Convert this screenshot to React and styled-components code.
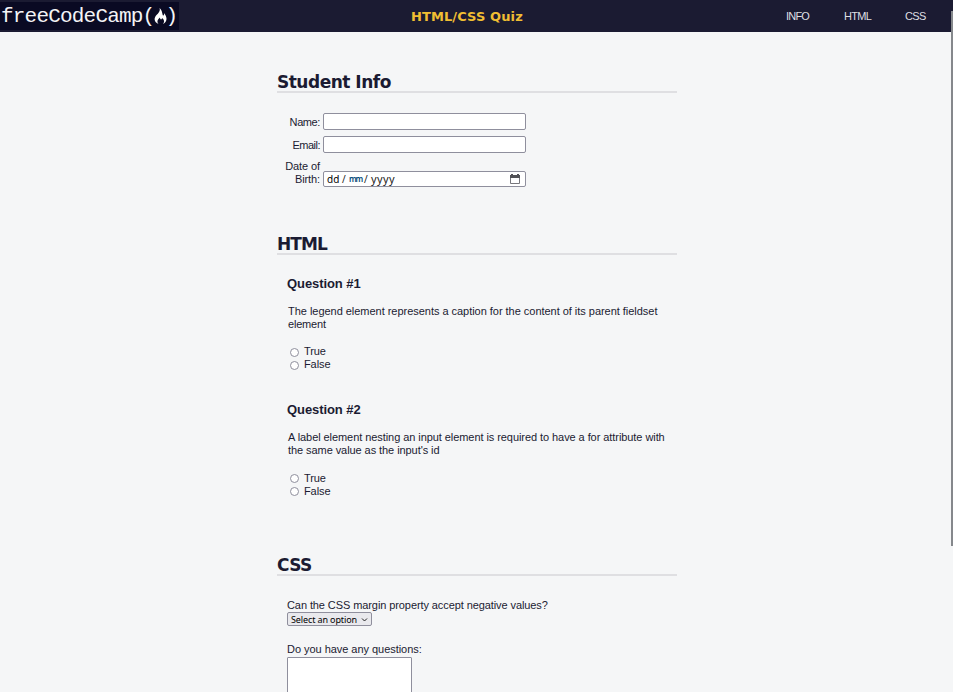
import React from "react";
import styled, { createGlobalStyle } from "styled-components";

const Global = createGlobalStyle`
  *, *::before, *::after { box-sizing: border-box; }
  html, body { margin: 0; overflow: hidden; }
  body {
    background: #f5f6f7;
    color: #1b1b32;
    font: 11px/13px "Liberation Sans", Arial, sans-serif;
  }
`;
const Page = styled.div`height: 692px; overflow: hidden;`;
const Header = styled.header`
  display: grid;
  grid-template-columns: 411px 1fr 167px;
  height: 32px;
  background: #1b1b32;
`;
const Logo = styled.div`
  display: flex;
  align-items: center;
  width: 179px;
  height: 28px;
  margin-top: 2px;
  padding: 1px 0 0 1px;
  background: #0a0a23;
  color: #f4f4f6;
  font: 21px/26px "Liberation Mono", monospace;
  letter-spacing: -0.8px;
  white-space: pre;
`;
const LogoDrawing = styled.svg`display: block; flex: none; margin: 0 -2px 1px 0;`;
const Title = styled.h1`
  margin: 0;
  color: #f1be32;
  font: bold 13px/33px "DejaVu Sans", Verdana, sans-serif;
  letter-spacing: 0.1px;
  white-space: nowrap;
`;
const Nav = styled.nav`
  display: grid;
  grid-template-columns: 58px 61px 1fr;
`;
const NavLink = styled.a`
  color: #dfdfe2;
  line-height: 33px;
  letter-spacing: ${(p) => p.$track || 0}px;
`;
const Form = styled.form`width: 400px; margin-left: 277px;`;
const Section = styled.section`
  height: ${(p) => p.$height}px;
  padding-top: 40px;
`;
const SectionTitle = styled.h2`
  height: 21px;
  margin: 0;
  border-bottom: 2px solid #dfdfe2;
  font: bold 17px/21px "DejaVu Sans", Verdana, sans-serif;
  letter-spacing: ${(p) => p.$track || 0}px;
  white-space: nowrap;
`;
const Fields = styled.div`
  display: grid;
  grid-template-columns: 43px 203px;
  grid-template-rows: 17px 17px 28px;
  column-gap: 3px;
  row-gap: 6px;
  padding-top: 20px;
`;
const Label = styled.label`
  align-self: end;
  padding-bottom: 1px;
  text-align: right;
  white-space: pre;
  letter-spacing: ${(p) => p.$track || 0}px;
`;
const Input = styled.input`
  width: 203px;
  height: 17px;
  padding: 1px 3px;
  border: 1px solid #8f8f9d;
  border-radius: 2px;
  background: #fff;
`;
const DateBox = styled.div`
  display: flex;
  align-self: end;
  align-items: center;
  justify-content: space-between;
  height: 16px;
  padding: 0 4px 0 3px;
  border: 1px solid #8f8f9d;
  border-radius: 2px;
  background: #fff;
  color: #222;
  font: 10px/14px "Noto Sans", sans-serif;
`;
const DateParts = styled.span`
  display: grid;
  grid-template-columns: 15px 7px 15px 7px auto;
`;
const DayPart = styled.span`color: #000;`;
const MonthPart = styled.span`
  color: #004a78;
  font-size: 8px;
  font-weight: 600;
  letter-spacing: -1.2px;
`;
const YearPart = styled.span`font-size: 11px; letter-spacing: 0.4px;`;
const Question = styled.fieldset`
  display: block;
  height: 126px;
  margin: 0;
  padding: 21px 0 0 10px;
  border: 0;
`;
const QuestionTitle = styled.h3`
  margin: 0;
  font: bold 13px/15px "Liberation Sans", Arial, sans-serif;
  letter-spacing: -0.08px;
`;
const Prompt = styled.p`
  margin: 14px 0 ${(p) => p.$below}px;
  padding-left: 1px;
  white-space: nowrap;
`;
const Line = styled.span`
  display: block;
  letter-spacing: ${(p) => p.$track || 0}px;
`;
const Option = styled.label`
  display: flex;
  align-items: center;
  height: 13px;
  padding-left: 3px;
  gap: 5px;
  letter-spacing: -0.1px;
`;
const Radio = styled.input`
  appearance: none;
  width: 9px;
  height: 9px;
  margin: ${(p) => p.$drop}px 0 0;
  border: 1px solid #8f8f9d;
  border-radius: 50%;
  background: #fff;
`;
const CssFields = styled.div`padding: 23px 0 0 10px;`;
const Select = styled.button`
  display: flex;
  align-items: center;
  justify-content: space-between;
  width: 85px;
  height: 14px;
  margin: 0 0 17px;
  padding: 1px 3px 0;
  border: 1px solid #8f8f9d;
  border-radius: 2px;
  background: #e9e9ed;
  color: #000;
  font: 9px/12px "Noto Sans", sans-serif;
  letter-spacing: -0.12px;
  white-space: nowrap;
`;
const TextArea = styled.textarea`
  display: block;
  width: 125px;
  height: 70px;
  margin-top: 1px;
  border: 1px solid #8f8f9d;
  border-radius: 1px;
  background: #fff;
  resize: none;
`;
const ScrollThumb = styled.div`
  position: absolute;
  top: 11px;
  right: 0;
  width: 2px;
  height: 535px;
  background: #85888c;
`;

const Flame = () => (
  <LogoDrawing width="13" height="18" viewBox="0 0 13 18">
    <path d="M5.500 1C8.500 3.500 8 6.500 9 8.500C10 8.500 10.300 7.500 10 6C13.500 10 13.500 15 9 17C11 14.500 10 12.500 8 11C8 13 6 13 6 10.500C3.500 12.500 2.500 14.500 4.500 17C0 15 -0.500 11.500 2.500 8C5 5.500 6.500 4 5.500 1Z" fill="#fff" />
  </LogoDrawing>
);
const Calendar = () => (
  <svg width="12" height="12" viewBox="0 0 12 12">
    <path d="M1.500 4V10.500H10.500V4" fill="none" stroke="#77777c" />
    <path d="M1 2H2V1H4V2H8V1H10V2H11V5H1Z" fill="#515156" />
  </svg>
);
const Chevron = () => (
  <svg width="7" height="6" viewBox="0 0 7 6">
    <path d="M1 1.500L3.500 4L6 1.500" fill="none" stroke="#222" />
  </svg>
);

function TrueFalse({ number, lines, below, drop }) {
  return (
    <Question>
      <QuestionTitle>Question #{number}</QuestionTitle>
      <Prompt $below={below}>
        {lines.map(([text, track]) => <Line key={text} $track={track}>{text}</Line>)}
      </Prompt>
      <Option><Radio type="radio" name={`q${number}`} $drop={drop} />True</Option>
      <Option><Radio type="radio" name={`q${number}`} $drop={drop} />False</Option>
    </Question>
  );
}

export default function App() {
  return (
    <Page>
      <Global />
      <Header>
        <Logo>freeCodeCamp(<Flame />)</Logo>
        <Title>HTML/CSS Quiz</Title>
        <Nav>
          <NavLink $track={-0.8}>INFO</NavLink>
          <NavLink $track={-0.7}>HTML</NavLink>
          <NavLink $track={-0.6}>CSS</NavLink>
        </Nav>
      </Header>
      <Form>
        <Section $height={162}>
          <SectionTitle $track={-0.5}>Student Info</SectionTitle>
          <Fields>
            <Label $track={-0.4}>Name:</Label><Input />
            <Label $track={-0.5}>Email:</Label><Input />
            <Label $track={-0.1}>{"Date of\nBirth:"}</Label>
            <DateBox>
              <DateParts>
                <DayPart>dd</DayPart><span>/</span><MonthPart>mm</MonthPart><span>/</span><YearPart>yyyy</YearPart>
              </DateParts>
              <Calendar />
            </DateBox>
          </Fields>
        </Section>
        <Section $height={321}>
          <SectionTitle $track={-0.9}>HTML</SectionTitle>
          <TrueFalse number={1} below={14} drop={2} lines={[["The legend element represents a caption for the content of its parent fieldset", -0.03], ["element", -0.2]]} />
          <TrueFalse number={2} below={15} drop={0} lines={[["A label element nesting an input element is required to have a for attribute with", -0.068], ["the same value as the input's id", -0.07]]} />
        </Section>
        <Section $height={177}>
          <SectionTitle $track={-0.6}>CSS</SectionTitle>
          <CssFields>
            <Line $track={-0.09}>Can the CSS margin property accept negative values?</Line>
            <Select type="button">Select an option<Chevron /></Select>
            <Line $track={-0.04}>Do you have any questions:</Line>
            <TextArea />
          </CssFields>
        </Section>
      </Form>
      <ScrollThumb />
    </Page>
  );
}
